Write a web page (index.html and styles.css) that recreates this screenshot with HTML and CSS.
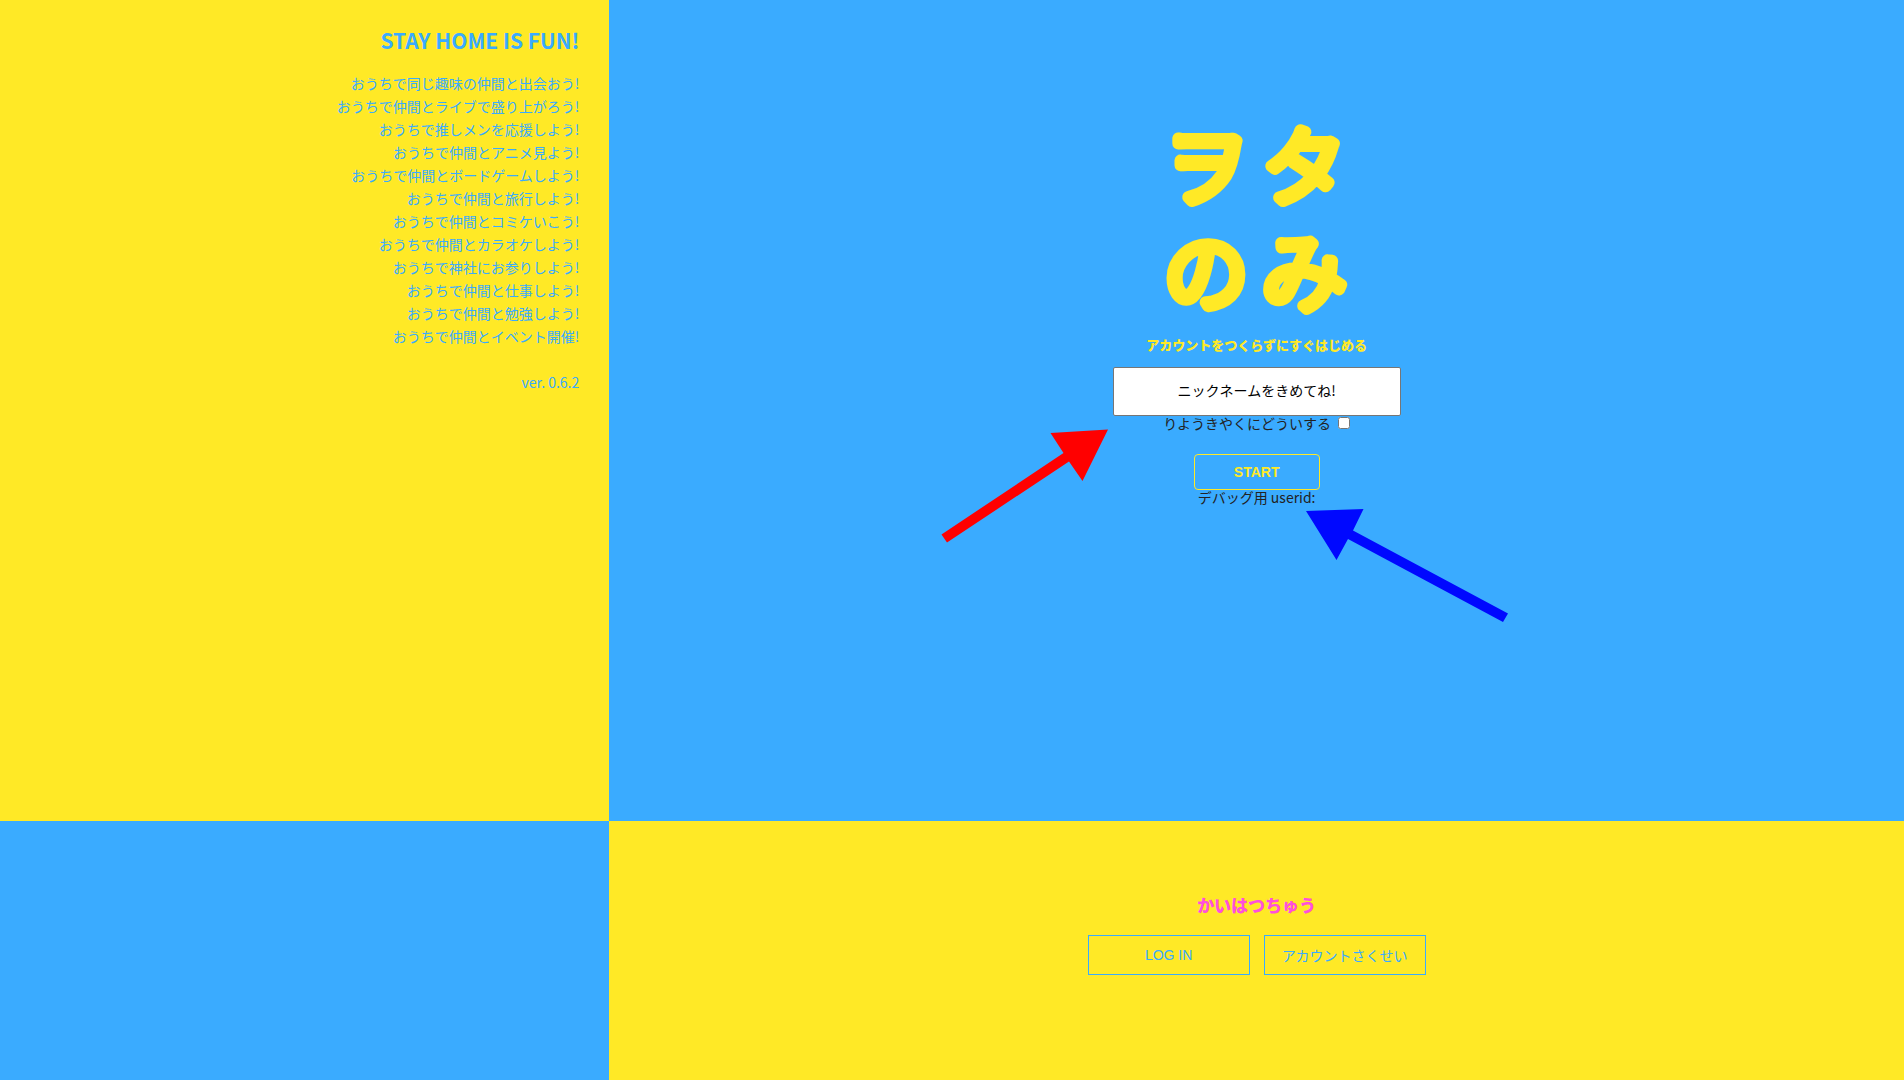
FILE: index.html
```html
<!DOCTYPE html>
<html lang="ja">
<head>
<meta charset="utf-8">
<meta name="viewport" content="width=device-width, initial-scale=1">
<title>ヲタのみ</title>
<link rel="stylesheet" href="styles.css">
</head>
<body>
<div class="page">
  <aside class="about">
    <h2 class="about-title">STAY HOME IS FUN!</h2>
    <ul class="about-list">
      <li>おうちで同じ趣味の仲間と出会おう!</li>
      <li>おうちで仲間とライブで盛り上がろう!</li>
      <li>おうちで推しメンを応援しよう!</li>
      <li>おうちで仲間とアニメ見よう!</li>
      <li>おうちで仲間とボードゲームしよう!</li>
      <li>おうちで仲間と旅行しよう!</li>
      <li>おうちで仲間とコミケいこう!</li>
      <li>おうちで仲間とカラオケしよう!</li>
      <li>おうちで神社にお参りしよう!</li>
      <li>おうちで仲間と仕事しよう!</li>
      <li>おうちで仲間と勉強しよう!</li>
      <li>おうちで仲間とイベント開催!</li>
    </ul>
    <p class="version">ver. 0.6.2</p>
  </aside>
  <main class="entry">
    <h1 class="logo">
      <svg class="logo-art" viewBox="0 0 220 216">
        <text x="59" y="86">ヲ</text>
        <text x="157" y="86">タ</text>
        <text x="59" y="192">の</text>
        <text x="157" y="192">み</text>
      </svg>
    </h1>
    <form class="start-form">
      <label class="tagline" for="nickname">アカウントをつくらずにすぐはじめる</label>
      <input class="nickname" id="nickname" type="text" placeholder="ニックネームをきめてね!">
      <div class="terms">
        <label for="terms">りようきやくにどういする</label>
        <input class="terms-check" id="terms" type="checkbox">
      </div>
      <button class="start" type="button">START</button>
      <p class="debug">デバッグ用 userid:</p>
    </form>
    <svg class="arrows" viewBox="940 428 570 196" aria-hidden="true">
      <path fill="#ff0000" d="M941.5 534.5 1063.5 453 1050.5 433 1108 429.500 1082.500 481 1069 461.500 947 542.500Z"/>
      <path fill="#0008ff" d="M1306 511 1363.500 509 1353 530.500 1508 613.500 1503 622 1348 539 1336.500 560Z"/>
    </svg>
  </main>
  <div class="corner"></div>
  <section class="account">
    <h2 class="account-title">かいはつちゅう</h2>
    <div class="account-actions">
      <button class="account-button" type="button">LOG IN</button>
      <button class="account-button" type="button">アカウントさくせい</button>
    </div>
  </section>
</div>
</body>
</html>
```
FILE: styles.css
```css
:root {
  --blue: #3aabff;
  --yellow: #ffe926;
  --pink: #ff50dc;
  --ink: #222;
}

* {
  box-sizing: border-box;
  margin: 0;
  padding: 0;
}

body {
  font: 14px/23px "Noto Sans CJK JP", sans-serif;
  color: var(--ink);
}

.page {
  display: grid;
  grid-template-columns: 32% 1fr;
  grid-template-rows: 76fr 24fr;
  min-height: 100vh;
}

.about {
  padding: 24px 30px;
  background: var(--yellow);
  color: var(--blue);
  text-align: right;
}

.about-title {
  margin-bottom: 16px;
  font-size: 21px;
  font-weight: 700;
  line-height: 32px;
}

.about-list {
  list-style: none;
}

.version {
  margin-top: 23px;
}

.entry {
  position: relative;
  display: flex;
  flex-direction: column;
  align-items: center;
  padding-top: 112px;
  background: var(--blue);
}

.logo-art {
  display: block;
  width: 220px;
  height: 216px;
  overflow: visible;
  fill: var(--yellow);
  stroke: var(--yellow);
  stroke-width: 12px;
  stroke-linejoin: round;
  font-size: 84px;
  font-weight: 300;
  text-anchor: middle;
}

.start-form {
  display: flex;
  flex-direction: column;
  align-items: center;
}

.tagline {
  margin: 5px 0 11px;
  color: var(--yellow);
  font-size: 13px;
  font-weight: 900;
}

.nickname {
  width: 288px;
  height: 49px;
  padding-bottom: 4px;
  border: 1px solid #767676;
  border-radius: 2px;
  background: #fff;
  font: 400 14px "Noto Sans CJK JP", sans-serif;
  text-align: center;
}

.nickname::placeholder {
  color: #000;
}

.terms {
  display: flex;
  align-items: center;
  gap: 7px;
  height: 14px;
  margin-bottom: 24px;
}

.terms-check {
  width: 12px;
  height: 12px;
}

.start {
  width: 126px;
  height: 36px;
  border: 1px solid var(--yellow);
  border-radius: 4px;
  background: transparent;
  color: var(--yellow);
  font: 700 14px "Liberation Sans", Arial, sans-serif;
}

.debug {
  line-height: 14px;
}

.arrows {
  position: absolute;
  top: 428px;
  left: calc(50% - 317px);
  width: 570px;
  height: 196px;
  pointer-events: none;
}

.corner {
  background: var(--blue);
}

.account {
  display: flex;
  flex-direction: column;
  align-items: center;
  gap: 18px;
  padding: 72px 0;
  background: var(--yellow);
}

.account-title {
  color: var(--pink);
  font-size: 17px;
  font-weight: 900;
  line-height: 24px;
}

.account-actions {
  display: flex;
  gap: 14px;
}

.account-button {
  width: 162px;
  height: 40px;
  border: 1px solid var(--blue);
  background: transparent;
  color: var(--blue);
  font: 400 14px "Liberation Sans", "Noto Sans CJK JP", sans-serif;
}
```
